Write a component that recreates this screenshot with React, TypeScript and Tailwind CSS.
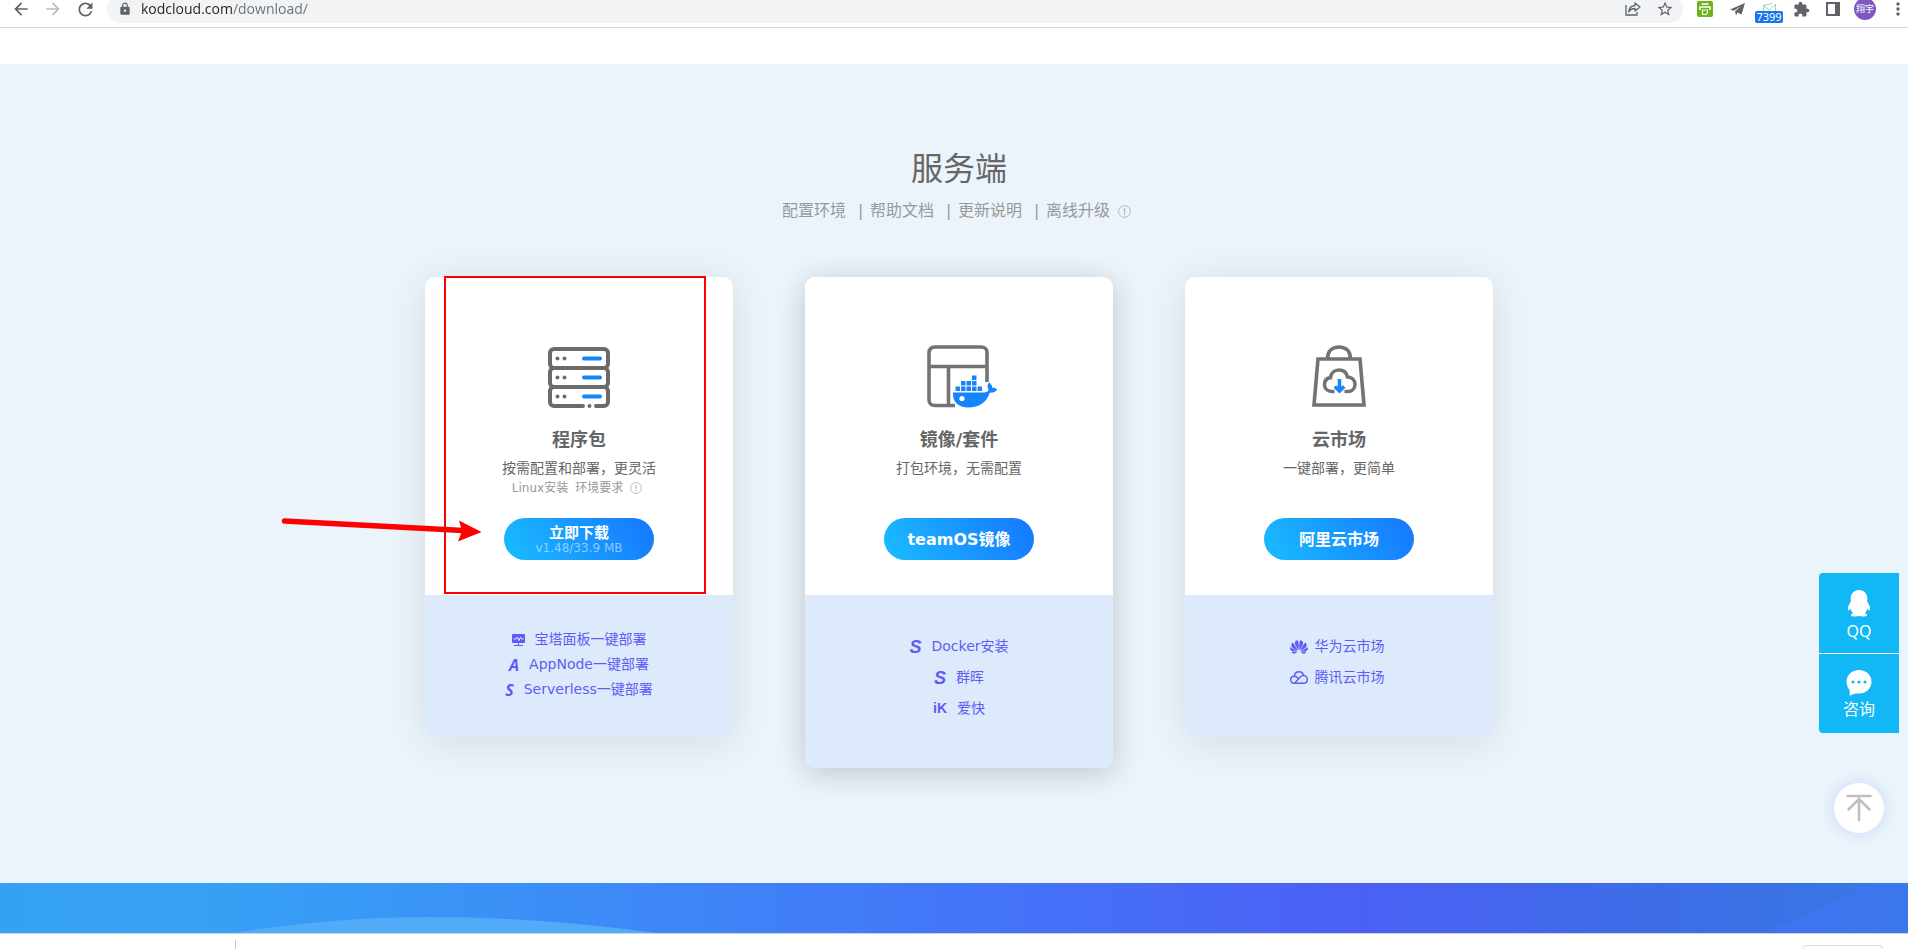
import type { ReactNode } from 'react'
import { MdArrowBack, MdArrowForward, MdExtension, MdLock, MdRefresh, MdStarBorder } from 'react-icons/md'
import { SiHuawei } from 'react-icons/si'

type LinkItem = {
  icon: ReactNode
  label: string
}

type CardProps = {
  icon: ReactNode
  title: string
  desc: string
  note?: ReactNode
  button: ReactNode
  links: LinkItem[]
  dense?: boolean
  raised?: boolean
  children?: ReactNode
}

const docLinks = ['配置环境', '帮助文档', '更新说明', '离线升级']

function InfoIcon({ size }: { size: number }) {
  return (
    <svg width={size} height={size} viewBox="0 0 14 14" fill="none" stroke="#b0b3b5">
      <circle cx="7" cy="7" r="6.300" />
      <path d="M7 3.500v4.500M7 9v1.400" strokeWidth="1.400" />
    </svg>
  )
}

function ServerIcon() {
  return (
    <svg width="62" height="61" viewBox="0 0 62 61" fill="none">
      <g stroke="#6b6b6b" strokeWidth="4">
        <rect x="2" y="2" width="58" height="19" rx="4" />
        <rect x="2" y="21" width="58" height="19" rx="4" />
        <path d="M35 59H6a4 4 0 0 1-4-4V44a4 4 0 0 1 4-4h50a4 4 0 0 1 4 4v11a4 4 0 0 1-4 4h-8" strokeLinecap="round" />
      </g>
      <g fill="#6b6b6b">
        <circle cx="9.500" cy="11.500" r="2" />
        <circle cx="16.500" cy="11.500" r="2" />
        <circle cx="9.500" cy="30.500" r="2" />
        <circle cx="16.500" cy="30.500" r="2" />
        <circle cx="9.500" cy="49.500" r="2" />
        <circle cx="16.500" cy="49.500" r="2" />
        <circle cx="41.500" cy="59" r="2" />
      </g>
      <path d="M36 11.500h16M36 30.500h16M36 49.500h16" stroke="#1684fc" strokeWidth="4" strokeLinecap="round" />
    </svg>
  )
}

function DockerIcon() {
  return (
    <svg width="70" height="63" viewBox="0 0 70 63" fill="none" className="ml-1.5">
      <path d="M28 60.500H7.500a5.500 5.500 0 0 1-5.500-5.500V7.500A5.500 5.500 0 0 1 7.500 2h47A5.500 5.500 0 0 1 60 7.500V37M2 21.500h58M21.500 22v38" stroke="#737373" strokeWidth="3.600" />
      <g fill="#1684fc">
        <path d="M26 47.500h31c2.500 0 4-1 4.600-2.800-1.600-2.500-1.400-5.200.6-7.200 2 1.500 3 3.300 3 5.300 1.800-.4 3.600.2 5 1.700-1.700 2.600-4.200 3.500-7.400 3.200C59.600 57.500 52 62.500 41 62.500c-10 0-15.600-5.500-15-15z" />
        <path d="M28.500 41.500h4.500v4.500h-4.500zM34 41.500h4.500v4.500H34zM39.500 41.500H44v4.500h-4.500zM45 41.500h4.500v4.500H45zM50.500 41.500H55v4.500h-4.500zM34 36h4.500v4.500H34zM39.500 36H44v4.500h-4.500zM45 36h4.500v4.500H45zM45 30.500h4.500V35H45z" />
      </g>
      <circle cx="35" cy="53.500" r="2.600" fill="#fff" />
    </svg>
  )
}

function BagIcon() {
  return (
    <svg width="54" height="63" viewBox="0 0 54 63" fill="none">
      <g stroke="#737373" strokeWidth="3.600">
        <path d="M6 14h42l4 46H2z" />
        <path d="M15.500 14C15.500 6 20 2 27 2s11.500 4 11.500 12" />
        <path d="M22.500 46.500H20c-4.400 0-7.500-3-7.500-7 0-3.600 2.400-6.300 6-6.900C19 28 22.400 25 27 25c4.400 0 7.600 2.700 8.500 7 4.600.3 7.500 3.300 7.500 7.200 0 4.300-3 7.300-7.500 7.300h-3" />
      </g>
      <path d="M27.500 34v12M22.800 41.500l4.700 4.500 4.700-4.500" stroke="#1684fc" strokeWidth="3.600" />
    </svg>
  )
}

function MonitorIcon() {
  return (
    <svg width="13" height="12" viewBox="0 0 13 12" fill="none">
      <path d="M1 0h11a1 1 0 0 1 1 1v7a1 1 0 0 1-1 1H1a1 1 0 0 1-1-1V1a1 1 0 0 1 1-1z" fill="#5f5cf5" />
      <path d="M1.500 5H4l1.200-2L7 6.500 8.500 3l1 2h2" stroke="#ddeafc" />
      <path d="M6.500 9v2M2 11.500h9" stroke="#5f5cf5" />
    </svg>
  )
}

function TencentCloudIcon() {
  return (
    <svg width="18" height="13" viewBox="0 0 18 13" fill="none" stroke="#5f5cf5" strokeWidth="1.400">
      <path d="M4.500 12.200c-2.300 0-3.800-1.500-3.800-3.500s1.500-3.500 3.600-3.500c1.500 0 2.500.6 4 2.100M4.300 5.200C4.600 2.600 6.400.8 9 .8c2.200 0 4 1.400 4.500 3.600M4.500 12.200h9c2.300 0 3.800-1.700 3.800-3.800 0-2.200-1.500-3.900-3.700-3.900-1.400 0-2.500.6-3.600 1.700l-5.500 6" />
    </svg>
  )
}

function Card({ icon, title, desc, note, button, links, dense, raised, children }: CardProps) {
  return (
    <div
      className={`relative w-[308px] rounded-[10px] ${
        raised ? 'shadow-[0_5px_30px_rgba(0,0,0,0.2)]' : 'shadow-[0_5px_40px_rgba(0,0,0,0.1)]'
      }`}
    >
      <div className="flex h-[318px] flex-col items-center rounded-t-[10px] bg-white pt-[68px] text-[#666]">
        <div className="flex h-[63px] items-end justify-center">{icon}</div>
        <h3 className="mt-[18px] text-lg leading-7 font-bold">{title}</h3>
        <p className="text-sm leading-7">{desc}</p>
        <div className="flex h-9 items-start gap-[7px] pr-1 text-xs leading-[12px] text-[#999]">{note}</div>
        {button}
      </div>
      <ul
        className={`flex min-h-[142px] flex-col items-center rounded-b-[10px] bg-[#ddeafc] text-sm text-[#5f5cf5] ${
          dense ? 'pt-8 leading-[25px]' : 'pt-9 pb-11 leading-[31px]'
        }`}
      >
        {links.map((item) => (
          <li key={item.label}>
            <a href="#" className={`flex items-center ${raised || dense ? 'gap-[10px]' : 'gap-[7px] pr-1'}`}>
              {item.icon}
              {item.label}
            </a>
          </li>
        ))}
      </ul>
      {children}
    </div>
  )
}

function BrowserBar() {
  return (
    <header className="h-7 overflow-hidden border-b border-[#d9dadc] bg-white">
      <div className="-mt-[5px] flex h-7 items-center pl-[5px] text-[#5f6368]">
        <button aria-label="Back" className="flex w-8 justify-center"><MdArrowBack size={20} /></button>
        <button aria-label="Forward" className="flex w-8 justify-center text-[#babcbe]"><MdArrowForward size={20} /></button>
        <button aria-label="Reload" className="flex w-8 justify-center"><MdRefresh size={21} /></button>
        <div className="mx-[6px] flex h-7 flex-1 items-center rounded-full bg-[#f1f3f4] pl-[11px]">
          <MdLock size={14} />
          <input
            aria-label="Address"
            defaultValue="kodcloud.com/download/"
            className="ml-[9px] h-[26px] flex-1 bg-[linear-gradient(to_right,#202124_92px,#6b6f73_92px)] bg-clip-text pb-[2px] font-['Open_Sans',sans-serif] text-sm text-transparent outline-none"
          />
          <button aria-label="Share" className="flex w-8 justify-center">
            <svg width="16" height="14" viewBox="0 0 16 14" fill="none" stroke="currentColor" strokeWidth="1.300">
              <path d="M1 3v10h11v-3" />
              <path d="M10 1l5 4-5 4V6.500C7 6.500 5 7.500 3.800 10 4 6 6.200 3.800 10 3.500z" strokeLinejoin="round" />
            </svg>
          </button>
          <button aria-label="Bookmark" className="mr-[2px] flex w-8 justify-center"><MdStarBorder size={18} /></button>
        </div>
        <button aria-label="Print" className="flex w-8 justify-center">
          <svg width="16" height="16" viewBox="0 0 16 16" fill="none">
            <rect width="16" height="16" rx="2" fill="#6fb31b" />
            <path d="M4.500 3h7M3 9V6h10v3" stroke="#fff" strokeWidth="1.500" />
            <path d="M5.500 9h5v2.500l-1.500 2H5.500z" stroke="#fff" strokeWidth="1.200" />
          </svg>
        </button>
        <button aria-label="Send" className="flex w-8 justify-center">
          <svg width="15" height="13" viewBox="0 0 15 13" fill="currentColor">
            <path d="M0 6.500L15 0 11.500 11.500 7.500 9.500 6 12.500 5 8.500 11 3 4 7.800z" />
          </svg>
        </button>
        <button aria-label="Mail" className="relative flex h-7 w-8 justify-center">
          <svg width="13" height="8" viewBox="0 0 13 8" fill="none" stroke="#9fcdb9" className="mt-2">
            <path d="M.5 8V2.500L6.500 7l6-6V8M.5 2.500L9 .5" />
          </svg>
          <span className="absolute bottom-0 left-[2px] h-3 w-7 rounded-[2px] bg-[#1a73e8] text-center font-['Noto_Sans',sans-serif] text-[11px] leading-[12px] text-white">
            7399
          </span>
        </button>
        <button aria-label="Extensions" className="flex w-8 justify-center"><MdExtension size={17} /></button>
        <button aria-label="Side panel" className="flex w-8 justify-center">
          <svg width="14" height="14" viewBox="0 0 14 14" fill="currentColor">
            <path d="M0 0h14v14H0zM2 2v10h7V2z" fillRule="evenodd" />
          </svg>
        </button>
        <button aria-label="Profile" className="flex w-8 justify-center">
          <span className="h-[22px] w-[22px] rounded-full bg-[#7e57c2] text-center text-[9px] leading-[22px] text-white">翔宇</span>
        </button>
        <button aria-label="Menu" className="flex w-[27px] justify-end pr-2">
          <svg width="4" height="14" viewBox="0 0 4 14" fill="currentColor">
            <circle cx="2" cy="2" r="1.700" />
            <circle cx="2" cy="7" r="1.700" />
            <circle cx="2" cy="12" r="1.700" />
          </svg>
        </button>
      </div>
    </header>
  )
}

function SideTools() {
  return (
    <aside>
      <div className="absolute top-[573px] right-[9px] flex w-20 flex-col gap-px overflow-hidden rounded-l-[4px] bg-white text-base text-white">
        <a href="#" className="flex h-20 flex-col items-center bg-[#12b7f5] pt-4">
          <svg width="24" height="28" viewBox="0 0 24 28" fill="#fff">
            <path d="M12 1c5.200 0 8.300 3.800 8.300 8.500 0 1.300-.1 2.300-.2 3.100 1.900 2.800 3.600 5.900 2.900 8.200-.3 1-1.300.7-2.500-1.300-.4 1.900-1.300 3.500-2.600 4.800 1.500.6 2.400 1.400 2 2.400-.4.900-5.600 1-7.900.4-2.300.6-7.500.5-7.900-.4-.4-1 .5-1.800 2-2.400-1.300-1.300-2.200-2.900-2.600-4.800-1.200 2-2.200 2.300-2.500 1.300-.7-2.300 1-5.400 2.900-8.200-.1-.8-.2-1.800-.2-3.100C3.700 4.800 6.800 1 12 1z" />
          </svg>
          <span className="font-['Noto_Sans',sans-serif] leading-7">QQ</span>
        </a>
        <a href="#" className="flex h-[79px] flex-col items-center bg-[#12b7f5] pt-4">
          <svg width="26" height="26" viewBox="0 0 26 26" fill="#fff">
            <path d="M13 0c7 0 12.500 5 12.500 11.800S20 23.600 13 23.600c-3.500 0-6 .3-8.600 2-.6.300-.9 0-.7-.6V20C1.600 18 .5 15 .5 11.800.5 5 6 0 13 0z" />
            <g fill="#12b7f5">
              <circle cx="7" cy="12" r="1.600" />
              <circle cx="13" cy="12" r="1.600" />
              <circle cx="19" cy="12" r="1.600" />
            </g>
          </svg>
          <span className="leading-7">咨询</span>
        </a>
      </div>
      <button
        aria-label="Back to top"
        className="absolute top-[783px] right-6 flex h-[50px] w-[50px] items-center justify-center rounded-full bg-white shadow-[0_0_15px_rgba(80,130,230,0.25)]"
      >
        <svg width="26" height="28" viewBox="0 0 26 28" fill="none" stroke="#bfbfbf" strokeWidth="2.600" strokeLinecap="round">
          <path d="M1.500 2h23M13 4.500V26M2.500 15.500L13 5l10.500 10.500" />
        </svg>
      </button>
    </aside>
  )
}

export default function App() {
  const buttonStyle =
    'flex h-[42px] w-[150px] flex-col items-center justify-center rounded-full bg-[linear-gradient(60deg,#1abcff,#1677ff)] pt-px font-bold text-white'
  const glyphStyle = "font-['Noto_Sans',sans-serif] text-base italic"
  const bigGlyphStyle = "font-['Liberation_Sans',sans-serif] text-lg italic"

  return (
    <div className="relative flex min-h-screen flex-col overflow-x-hidden bg-white font-['DejaVu_Sans','Noto_Sans_CJK_SC',sans-serif]">
      <BrowserBar />
      <div className="h-9" />
      <main className="flex flex-1 flex-col items-center bg-[#ecf4fb] pt-[81px] pb-[115px] pl-[10px]">
        <h1 className="text-[32px] leading-[48px] text-[#666]">服务端</h1>
        <nav className="mt-[6px] flex items-center pr-[5px] text-base leading-6 text-[#999]">
          {docLinks.map((label, i) => (
            <div key={label} className="flex">
              {i > 0 && <span className="mr-[7px] ml-3 w-[5px]">|</span>}
              <a href="#">{label}</a>
            </div>
          ))}
          <span className="ml-2"><InfoIcon size={13} /></span>
        </nav>
        <div className="mt-[54px] flex items-start gap-[72px]">
          <Card
            icon={<ServerIcon />}
            title="程序包"
            desc="按需配置和部署，更灵活"
            note={
              <>
                <a href="#">Linux安装</a>
                <a href="#">环境要求</a>
                <InfoIcon size={12} />
              </>
            }
            button={
              <button className={buttonStyle}>
                <span className="text-[15px] leading-4">立即下载</span>
                <span className="text-xs leading-[14px] font-normal text-white/50">v1.48/33.9 MB</span>
              </button>
            }
            links={[
              { icon: <MonitorIcon />, label: '宝塔面板一键部署' },
              { icon: <b className={glyphStyle}>A</b>, label: 'AppNode一键部署' },
              { icon: <b className={glyphStyle}>S</b>, label: 'Serverless一键部署' },
            ]}
            dense
          >
            <div className="pointer-events-none absolute -top-px left-[19px] h-[318px] w-[262px] border-2 border-[#f00]" />
            <svg width="202" height="28" viewBox="0 0 202 28" className="pointer-events-none absolute top-[240px] -left-[144px]">
              <path d="M3.500 4L182 13.500" stroke="#f00" strokeWidth="5.500" strokeLinecap="round" />
              <path d="M178 3.500L200.500 15 177 24.500 181 14z" fill="#f00" />
            </svg>
          </Card>
          <Card
            icon={<DockerIcon />}
            title="镜像/套件"
            desc="打包环境，无需配置"
            button={<button className={buttonStyle}>teamOS镜像</button>}
            links={[
              { icon: <b className={bigGlyphStyle}>S</b>, label: 'Docker安装' },
              { icon: <b className={bigGlyphStyle}>S</b>, label: '群晖' },
              { icon: <b className="font-['Liberation_Sans',sans-serif]">iK</b>, label: '爱快' },
            ]}
            raised
          />
          <Card
            icon={<BagIcon />}
            title="云市场"
            desc="一键部署，更简单"
            button={<button className={buttonStyle}>阿里云市场</button>}
            links={[
              { icon: <SiHuawei size={18} />, label: '华为云市场' },
              { icon: <TencentCloudIcon />, label: '腾讯云市场' },
            ]}
          />
        </div>
      </main>
      <svg className="h-[50px] w-full shrink-0" viewBox="0 0 1908 50" preserveAspectRatio="none">
        <defs>
          <linearGradient id="band">
            <stop offset="0" stopColor="#35a1f5" />
            <stop offset="0.12" stopColor="#36a0f5" />
            <stop offset="0.5" stopColor="#4376f8" />
            <stop offset="0.71" stopColor="#4b60f6" />
            <stop offset="0.87" stopColor="#3d6de6" />
            <stop offset="1" stopColor="#3779e4" />
          </linearGradient>
          <linearGradient id="corner">
            <stop offset="0" stopColor="#4272f3" />
            <stop offset="1" stopColor="#3a78ea" />
          </linearGradient>
        </defs>
        <path d="M0 0h1908v50H0z" fill="url(#band)" />
        <path d="M234 50Q330 34 430 34Q540 34 657 50z" fill="#52abf8" />
        <path d="M1766 50L1876 0h32v50z" fill="url(#corner)" />
      </svg>
      <footer className="flex h-4 items-end justify-between overflow-hidden border-t border-[#d0d4d8] bg-white pr-[25px] pl-[235px]">
        <div className="h-[9px] w-px bg-[#c8c8c8]" />
        <div className="h-1 w-20 rounded-t-[4px] border border-b-0 border-[#dadce0]" />
      </footer>
      <SideTools />
    </div>
  )
}
